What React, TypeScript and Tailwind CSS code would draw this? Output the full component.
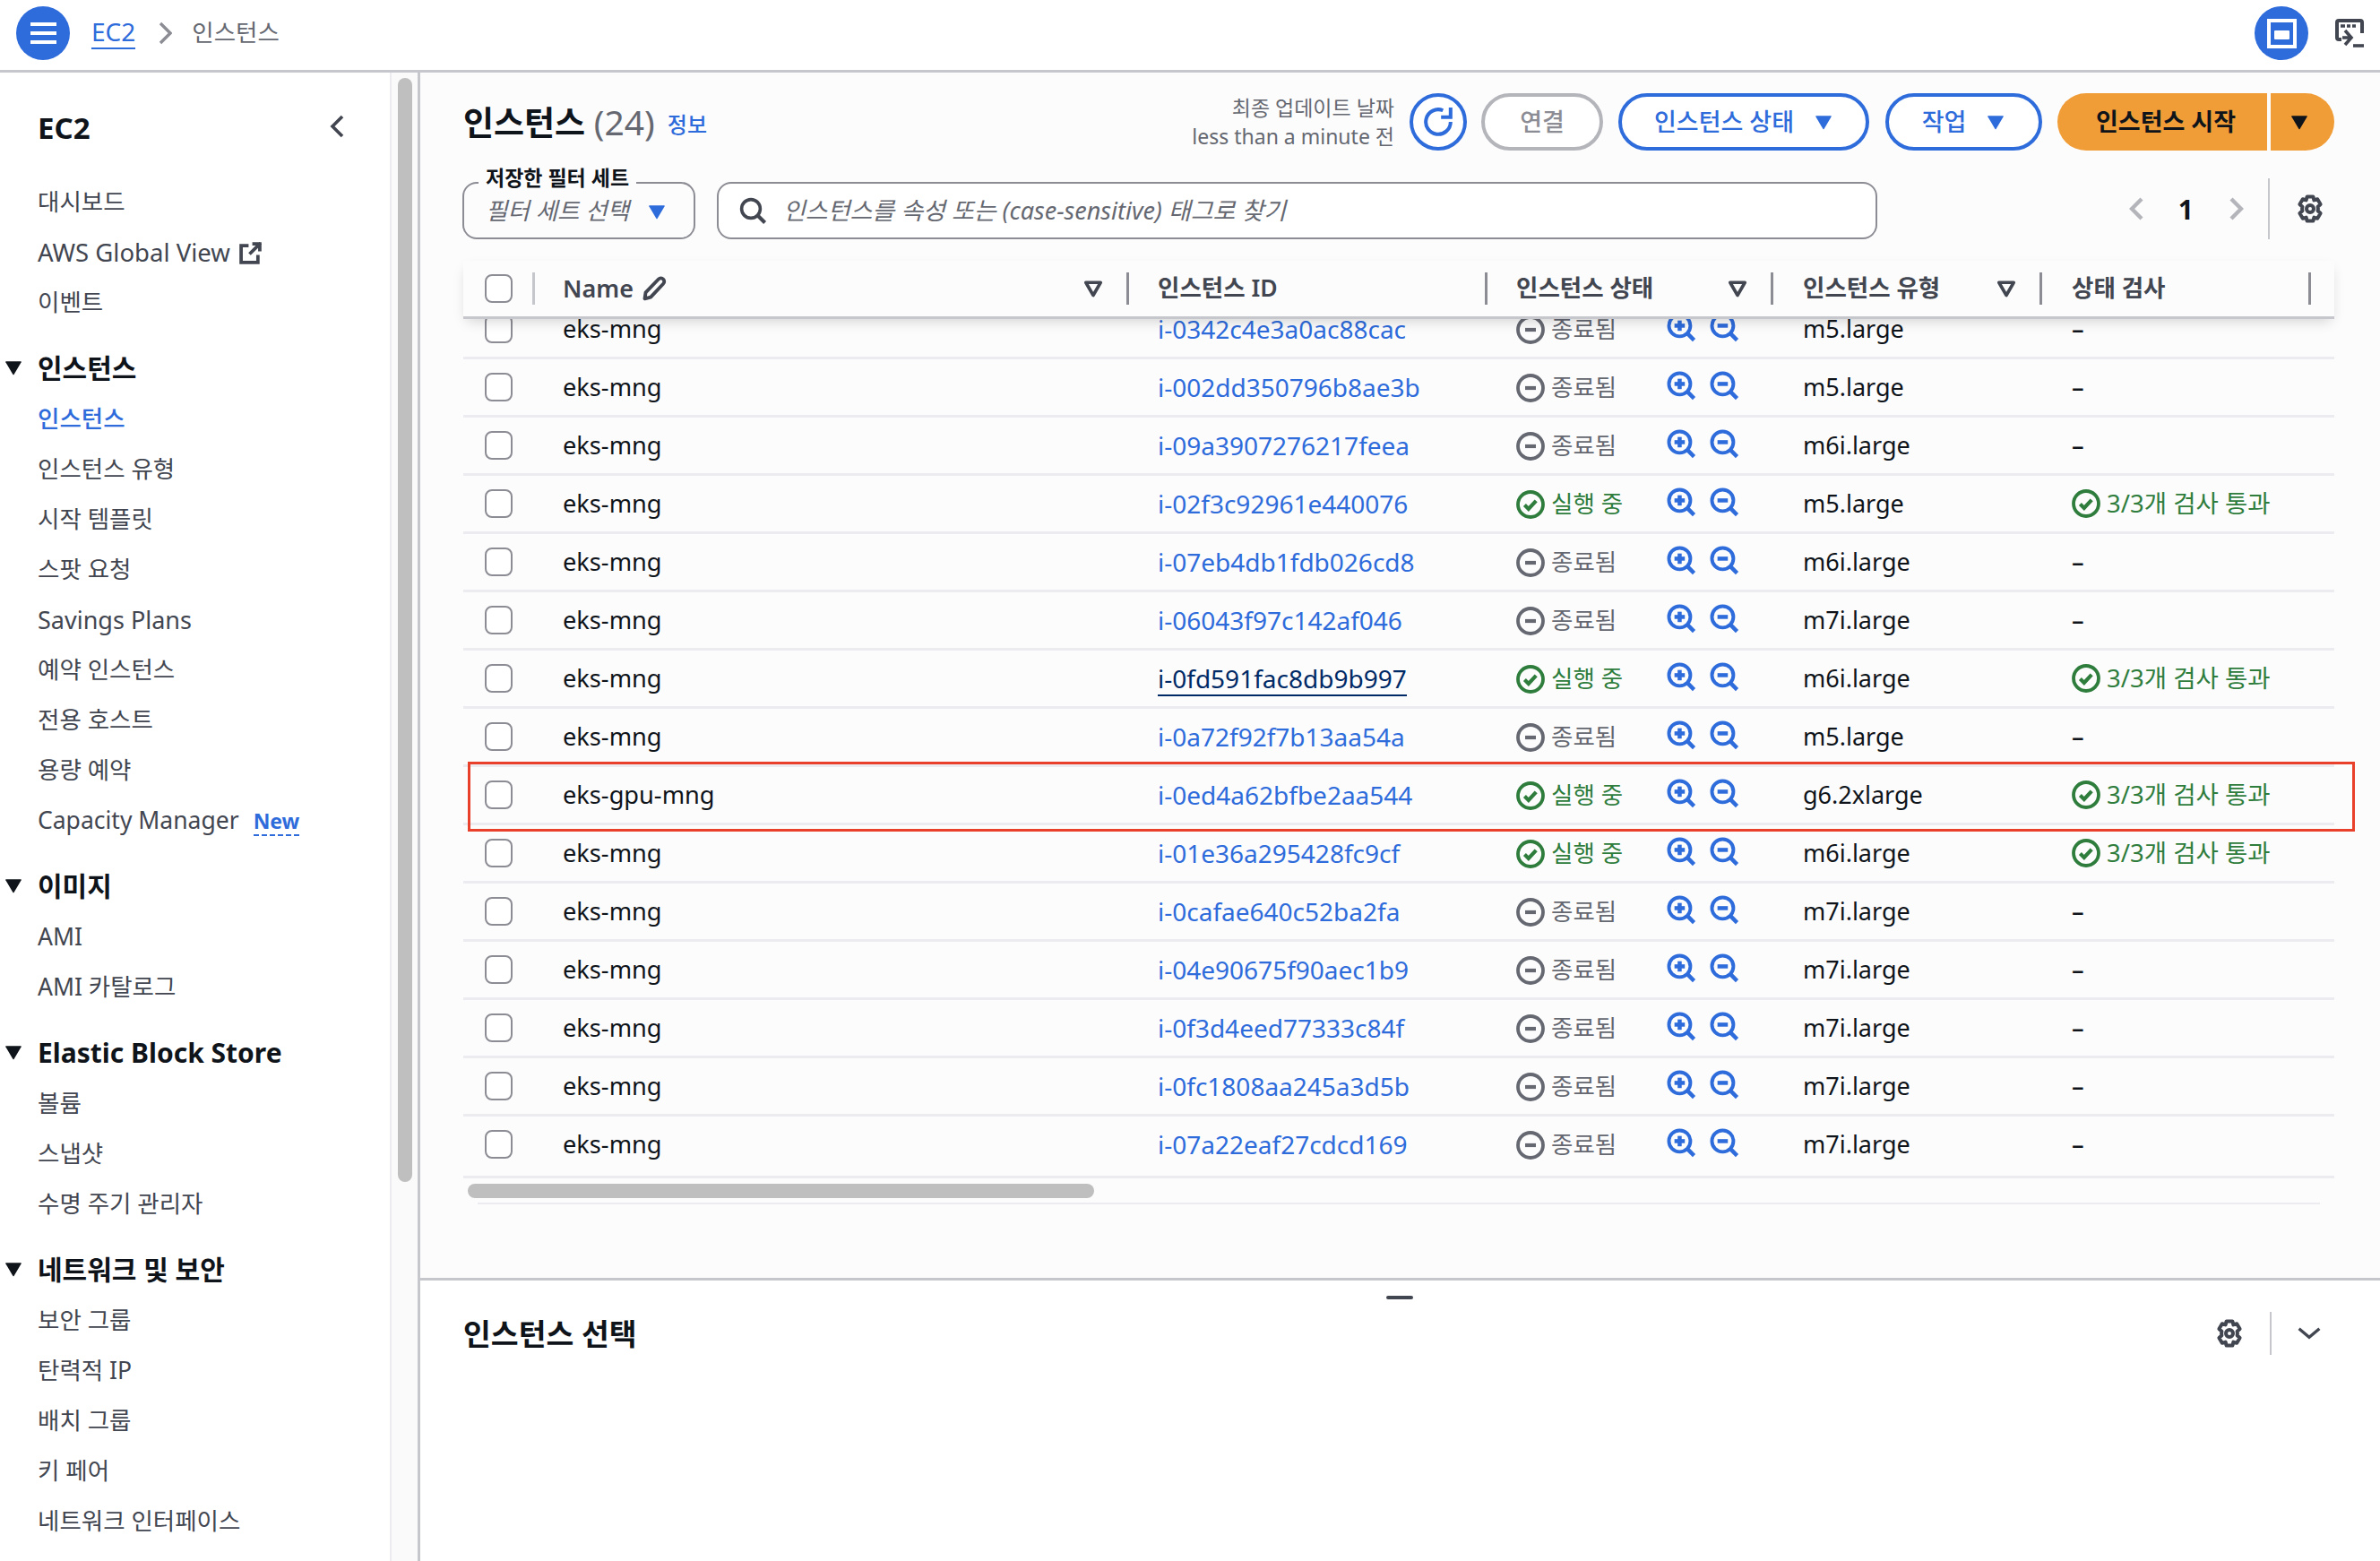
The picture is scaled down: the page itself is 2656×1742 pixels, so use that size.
import React from "react";

const FONT = "font-['Noto_Sans','Noto_Sans_CJK_KR',sans-serif]";

type Row = { name: string; id: string; on: boolean; type: string; hover?: boolean };

const rows: Row[] = [
  { name: "eks-mng", id: "i-0342c4e3a0ac88cac", on: false, type: "m5.large" },
  { name: "eks-mng", id: "i-002dd350796b8ae3b", on: false, type: "m5.large" },
  { name: "eks-mng", id: "i-09a3907276217feea", on: false, type: "m6i.large" },
  { name: "eks-mng", id: "i-02f3c92961e440076", on: true, type: "m5.large" },
  { name: "eks-mng", id: "i-07eb4db1fdb026cd8", on: false, type: "m6i.large" },
  { name: "eks-mng", id: "i-06043f97c142af046", on: false, type: "m7i.large" },
  { name: "eks-mng", id: "i-0fd591fac8db9b997", on: true, type: "m6i.large", hover: true },
  { name: "eks-mng", id: "i-0a72f92f7b13aa54a", on: false, type: "m5.large" },
  { name: "eks-gpu-mng", id: "i-0ed4a62bfbe2aa544", on: true, type: "g6.2xlarge" },
  { name: "eks-mng", id: "i-01e36a295428fc9cf", on: true, type: "m6i.large" },
  { name: "eks-mng", id: "i-0cafae640c52ba2fa", on: false, type: "m7i.large" },
  { name: "eks-mng", id: "i-04e90675f90aec1b9", on: false, type: "m7i.large" },
  { name: "eks-mng", id: "i-0f3d4eed77333c84f", on: false, type: "m7i.large" },
  { name: "eks-mng", id: "i-0fc1808aa245a3d5b", on: false, type: "m7i.large" },
  { name: "eks-mng", id: "i-07a22eaf27cdcd169", on: false, type: "m7i.large" },
];

const navGroups = [
  {
    title: "인스턴스",
    items: ["인스턴스", "인스턴스 유형", "시작 템플릿", "스팟 요청", "Savings Plans", "예약 인스턴스", "전용 호스트", "용량 예약", "Capacity Manager"],
  },
  { title: "이미지", items: ["AMI", "AMI 카탈로그"] },
  { title: "Elastic Block Store", items: ["볼륨", "스냅샷", "수명 주기 관리자"] },
  { title: "네트워크 및 보안", items: ["보안 그룹", "탄력적 IP", "배치 그룹", "키 페어", "네트워크 인터페이스"] },
];

function Caret({ className }: { className: string }) {
  return (
    <svg viewBox="0 0 16 16" className={className} fill="currentColor">
      <path d="M2.2 3h11.6a.6.6 0 0 1 .5.9L8.5 13.6a.6.6 0 0 1-1 0L1.7 3.9a.6.6 0 0 1 .5-.9z" />
    </svg>
  );
}

function FilterCaret() {
  return (
    <svg viewBox="0 0 16 16" className="w-[24px] h-[24px] text-[#424650]" fill="none" stroke="currentColor" strokeWidth="2.4" strokeLinejoin="round">
      <path d="M2.5 3.5h11L8 13z" />
    </svg>
  );
}

function Gear() {
  return (
    <svg viewBox="0 0 16 16" className="w-[32px] h-[32px] text-[#424650]" fill="none" stroke="currentColor" strokeWidth="2" strokeLinejoin="round">
      <circle cx="8" cy="8" r="2" />
      <path d="M6.3 1.2h3.4l.5 2 1.9-.6 1.7 2.9-1.5 1.4a4 4 0 0 1 0 2.2l1.5 1.4-1.7 2.9-1.9-.6-.5 2H6.3l-.5-2-1.9.6-1.7-2.9 1.5-1.4a4 4 0 0 1 0-2.2L2.2 5.5l1.7-2.9 1.9.6z" />
    </svg>
  );
}

function StateIcon({ on, className }: { on: boolean; className: string }) {
  return (
    <svg viewBox="0 0 16 16" className={className} fill="none" stroke="currentColor" strokeWidth="1.9">
      <circle cx="8" cy="8" r="7" />
      {on ? <path d="M4.7 8.3l2.2 2.2 4.2-4.6" strokeWidth="2.1" /> : <path d="M5 8h6" strokeWidth="2.1" />}
    </svg>
  );
}

function Zoom({ plus }: { plus?: boolean }) {
  return (
    <svg viewBox="0 0 16 16" className="w-[33px] h-[33px] text-[#2e6bdb]" fill="none" stroke="currentColor" strokeWidth="1.9">
      <circle cx="7" cy="7" r="5.8" />
      <path d="M11.2 11.2l3.6 3.6" strokeWidth="2.2" />
      <path d="M4.2 7h5.6" strokeWidth="2.2" />
      {plus && <path d="M7 4.2v5.6" strokeWidth="2.2" />}
    </svg>
  );
}

function Checkbox() {
  return <div className="w-[31px] h-[32px] shrink-0 rounded-[8px] border-2 border-[#8c8c94] bg-white" />;
}

function Sep({ dark }: { dark?: boolean }) {
  return <div className={`w-[3px] h-[36px] shrink-0 ${dark ? "bg-[#8c8c94]" : "bg-[#c6c6cd]"}`} />;
}

function TopBar() {
  return (
    <div className="h-[81px] shrink-0 border-b-[3px] border-[#c6c6cd] bg-white flex items-center pl-[18px] pr-[18px]">
      <div className="w-[60px] h-[60px] rounded-full bg-[#2e6bdb] flex flex-col items-center justify-center gap-[6px] -mt-[4px]">
        <div className="w-[29px] h-[4px] bg-white" />
        <div className="w-[29px] h-[4px] bg-white" />
        <div className="w-[29px] h-[4px] bg-white" />
      </div>
      <a className="ml-[24px] -mt-[6px] text-[28px] leading-[36px] text-[#2e6bdb] border-b-2 border-[#2e6bdb]">EC2</a>
      <svg viewBox="0 0 15 26" className="ml-[26px] -mt-[4px] w-[15px] h-[26px] text-[#8c8c94]" fill="none" stroke="currentColor" strokeWidth="3.4">
        <path d="M2 2l11 11L2 24" />
      </svg>
      <span className="ml-[22px] -mt-[5px] text-[26.5px] text-[#656871]">인스턴스</span>
      <div className="ml-auto -mt-[4px] w-[60px] h-[60px] rounded-full bg-[#2e6bdb] flex items-center justify-center">
        <div className="w-[33px] h-[33px] border-[4px] border-white flex items-center justify-center">
          <div className="w-[17px] h-[10px] mt-[3px] bg-white rounded-[1px]" />
        </div>
      </div>
      <svg viewBox="0 0 32 32" className="ml-[30px] -mt-[4px] w-[32px] h-[32px] text-[#424650]" fill="none" stroke="currentColor" strokeWidth="4">
        <path d="M7 23H4a2 2 0 0 1-2-2V4a2 2 0 0 1 2-2h24a2 2 0 0 1 2 2v12" />
        <path d="M8 21h10M11 13l7 8-7 8" strokeWidth="3.6" />
        <path d="M20 30h12" strokeWidth="3.6" />
        <path d="M6 8h5M13 8h4M19 8h4" strokeWidth="3.4" />
      </svg>
    </div>
  );
}

function Sidebar() {
  return (
    <aside className="w-[437px] shrink-0 border-r-2 border-[#ececf0] bg-white pl-[42px] pr-[50px] overflow-hidden">
      <div className="h-[117px] flex items-center justify-between pt-[6px]">
        <span className="text-[33px] font-bold text-[#0f141a]">EC2</span>
        <svg viewBox="0 0 16 26" className="w-[16px] h-[26px] mr-[1px] -mt-[4px] text-[#424650]" fill="none" stroke="currentColor" strokeWidth="3.6">
          <path d="M14 2L3 13l11 11" />
        </svg>
      </div>
      <div className="h-[56px] flex items-center text-[26.5px] text-[#424650]">대시보드</div>
      <div className="h-[56px] flex items-center gap-[10px] text-[27.5px] text-[#424650]">
        AWS Global View
        <svg viewBox="0 0 24 24" className="w-[25px] h-[25px]" fill="none" stroke="currentColor" strokeWidth="3.6">
          <path d="M10 4H2v18h18v-8" />
          <path d="M23 1L11 13M14 2h8v8" />
        </svg>
      </div>
      <div className="h-[56px] flex items-center text-[26.5px] text-[#424650]">이벤트</div>
      {navGroups.map((g) => (
        <div key={g.title} className="mt-[14px]">
          <div className="relative h-[60px] flex items-center text-[30px] font-bold text-[#0f141a]">
            <Caret className="absolute -left-[38px] top-[19px] w-[22px] h-[22px]" />
            {g.title}
          </div>
          {g.items.map((item, i) => (
            <div
              key={item}
              className={`h-[56px] flex items-center gap-[16px] ${item === "Savings Plans" ? "text-[27px]" : "text-[26.5px]"} ${
                g.title === "인스턴스" && i === 0 ? "text-[#2e6bdb] font-medium" : "text-[#424650]"
              }`}
            >
              {item}
              {item === "Capacity Manager" && (
                <span className="mt-[2px] text-[23px] font-bold leading-[30px] text-[#2e6bdb] border-b-2 border-dashed border-[#2e6bdb]">New</span>
              )}
            </div>
          ))}
        </div>
      ))}
    </aside>
  );
}

function Toolbar() {
  return (
    <div className="flex items-center">
      <h1 className="text-[37px] font-bold text-[#0f141a] leading-[48px]">
        인스턴스 <span className="text-[39px] font-normal text-[#656871]">(24)</span>
      </h1>
      <a className="ml-[14px] mt-[6px] text-[24px] font-medium text-[#2e6bdb]">정보</a>
      <div className="ml-auto text-right text-[23px] leading-[32px] text-[#656871]">
        <div>최종 업데이트 날짜</div>
        <div>less than a minute 전</div>
      </div>
      <button className="ml-[17px] w-[64px] h-[64px] rounded-full border-[4px] border-[#2e6bdb] bg-white flex items-center justify-center text-[#2e6bdb]">
        <svg viewBox="0 0 32 32" className="w-[34px] h-[34px]" fill="none" stroke="currentColor" strokeWidth="3.8">
          <path d="M29 16A13 13 0 1 1 21 4" />
          <path d="M19 11h10V1" />
        </svg>
      </button>
      <button className="ml-[16px] w-[136px] h-[64px] rounded-full border-[4px] border-[#b4b4bb] bg-white text-[27px] font-medium text-[#8c8c94]">연결</button>
      <button className="ml-[17px] w-[280px] h-[64px] rounded-full border-[4px] border-[#2e6bdb] bg-white flex items-center justify-center gap-[22px] text-[27px] font-medium text-[#2e6bdb]">
        인스턴스 상태
        <Caret className="w-[22px] h-[22px]" />
      </button>
      <button className="ml-[18px] w-[175px] h-[64px] rounded-full border-[4px] border-[#2e6bdb] bg-white flex items-center justify-center gap-[22px] text-[27px] font-medium text-[#2e6bdb]">
        작업
        <Caret className="w-[22px] h-[22px]" />
      </button>
      <button className="ml-[17px] w-[234px] h-[64px] rounded-l-full bg-[#f09d38] text-[27px] font-bold text-[#0f141a] pl-[8px]">인스턴스 시작</button>
      <button className="ml-[4px] w-[71px] h-[64px] rounded-r-full bg-[#f09d38] flex items-center justify-center pr-[8px] text-[#0f141a]">
        <Caret className="w-[22px] h-[22px]" />
      </button>
    </div>
  );
}

function FilterBar() {
  return (
    <div className="mt-[35px] flex items-center">
      <div className="relative -ml-[1px] w-[260px] h-[64px] rounded-[16px] border-2 border-[#8c8c94] flex items-center pl-[24px]">
        <span className="absolute left-[16px] -top-[24px] bg-[#fcfcfd] px-[8px] text-[23px] leading-[34px] font-bold text-[#0f141a]">저장한 필터 세트</span>
        <span className="mt-[1px] text-[26.5px] italic text-[#656871]">필터 세트 선택</span>
        <Caret className="ml-[20px] mt-[1px] w-[22px] h-[22px] text-[#2e6bdb]" />
      </div>
      <div className="ml-[24px] w-[1295px] h-[64px] rounded-[16px] border-2 border-[#8c8c94] bg-white flex items-center pl-[22px]">
        <svg viewBox="0 0 16 16" className="w-[32px] h-[32px] text-[#424650]" fill="none" stroke="currentColor" strokeWidth="1.8">
          <circle cx="7" cy="7" r="5.2" />
          <path d="M10.8 10.8l4 4" strokeWidth="2.1" />
        </svg>
        <span className="ml-[18px] text-[27px] italic text-[#656871]">인스턴스를 속성 또는 (case-sensitive) 태그로 찾기</span>
      </div>
      <div className="ml-auto flex items-center h-[68px] -mt-[4px]">
        <svg viewBox="0 0 16 26" className="w-[16px] h-[26px] text-[#b4b4bb]" fill="none" stroke="currentColor" strokeWidth="4.4">
          <path d="M14 2L3 13l11 11" />
        </svg>
        <span className="ml-[39px] text-[30px] font-bold text-[#0f141a]">1</span>
        <svg viewBox="0 0 16 26" className="ml-[40px] w-[16px] h-[26px] text-[#b4b4bb]" fill="none" stroke="currentColor" strokeWidth="4.4">
          <path d="M2 2l11 11L2 24" />
        </svg>
        <div className="ml-[27px] w-[2px] h-[68px] bg-[#c6c6cd]" />
        <div className="ml-[29px] mr-[11px]">
          <Gear />
        </div>
      </div>
    </div>
  );
}

function TableHead() {
  return (
    <div className="relative z-10 mt-[24px] h-[65px] flex items-center border-b-[3px] border-[#c6c6cd] text-[26.5px] font-semibold text-[#424650] bg-[#fcfcfd] shadow-[0_6px_14px_-4px_rgba(0,0,0,0.18)]">
      <div className="w-[111px] shrink-0 flex items-center pl-[24px] gap-[22px]">
        <Checkbox />
        <Sep />
      </div>
      <div className="w-[664px] shrink-0 flex items-center pr-[32px]">
        <span className="text-[27px]">Name</span>
        <svg viewBox="0 0 16 16" className="ml-[9px] w-[28px] h-[28px]" fill="none" stroke="currentColor" strokeWidth="2.2" strokeLinejoin="round">
          <path d="M2 14.5l.6-4L10.8 2a2 2 0 0 1 3 3l-8 8.5z" />
        </svg>
        <div className="ml-auto flex items-center gap-[25px]">
          <FilterCaret />
          <Sep dark />
        </div>
      </div>
      <div className="w-[400px] shrink-0 flex items-center justify-between pr-[32px]">
        인스턴스 ID
        <Sep dark />
      </div>
      <div className="w-[320px] shrink-0 flex items-center pr-[33px]">
        인스턴스 상태
        <div className="ml-auto flex items-center gap-[25px]">
          <FilterCaret />
          <Sep dark />
        </div>
      </div>
      <div className="w-[300px] shrink-0 flex items-center pr-[33px]">
        인스턴스 유형
        <div className="ml-auto flex items-center gap-[25px]">
          <FilterCaret />
          <Sep dark />
        </div>
      </div>
      <div className="flex-1 flex items-center justify-between pr-[26px]">
        상태 검사
        <Sep dark />
      </div>
    </div>
  );
}

function TableRow({ row, last }: { row: Row; last: boolean }) {
  return (
    <div className={`flex items-start border-b-[3px] border-[#ececf0] text-[27.2px] text-[#0f141a] ${last ? "h-[69px]" : "h-[65px]"}`}>
      <div className="w-[111px] h-[62px] shrink-0 flex items-center pl-[24px]">
        <Checkbox />
      </div>
      <div className="w-[664px] h-[62px] shrink-0 flex items-center">{row.name}</div>
      <div className="w-[400px] h-[62px] shrink-0 flex items-center text-[28px]">
        <a className={row.hover ? "text-[#002a66] border-b-2 border-[#002a66] leading-[36px] mt-[2px]" : "text-[#2e6bdb]"}>{row.id}</a>
      </div>
      <div className="w-[320px] h-[62px] shrink-0 flex items-center">
        <StateIcon on={row.on} className={`w-[32px] h-[32px] mt-[1px] ${row.on ? "text-[#2f7d3c]" : "text-[#656871]"}`} />
        <span className={`ml-[7px] mt-[1px] w-[129px] text-[26.5px] ${row.on ? "text-[#2f7d3c]" : "text-[#656871]"}`}>{row.on ? "실행 중" : "종료됨"}</span>
        <div className="flex items-center gap-[15px] -mt-[3px]">
          <Zoom plus />
          <Zoom />
        </div>
      </div>
      <div className="w-[300px] h-[62px] shrink-0 flex items-center text-[27px]">{row.type}</div>
      <div className="flex-1 h-[62px] flex items-center">
        {row.on ? (
          <>
            <StateIcon on className="w-[32px] h-[32px] text-[#2f7d3c]" />
            <span className="ml-[7px] text-[27.5px] text-[#2f7d3c]">3/3개 검사 통과</span>
          </>
        ) : (
          <span className="font-medium">–</span>
        )}
      </div>
    </div>
  );
}

function InstanceTable() {
  return (
    <>
      <TableHead />
      <div className="h-[959px] overflow-hidden">
        <div className="-mt-[20px]">
          {rows.map((row, i) => (
            <TableRow key={row.id} row={row} last={i === rows.length - 1} />
          ))}
        </div>
      </div>
      <div className="mt-[6px] ml-[5px] w-[699px] h-[16px] rounded-full bg-[#bfbfbf]" />
      <div className="mt-[5px] mx-[16px] h-[2px] bg-[#ececf0]" />
    </>
  );
}

export default function App() {
  return (
    <div className={`h-screen w-screen overflow-hidden flex flex-col bg-white ${FONT}`}>
      <TopBar />
      <div className="flex-1 flex min-h-0">
        <Sidebar />
        <div className="w-[29px] shrink-0 bg-[#fafafa] pl-[7px] pt-[6px]">
          <div className="w-[16px] h-[1232px] rounded-full bg-[#bfbfbf]" />
        </div>
        <main className="flex-1 flex flex-col min-w-0 border-l-[3px] border-[#c6c6cd]">
          <section className="relative h-[1348px] shrink-0 bg-[#fcfcfd] pl-[48px] pr-[51px] pt-[23px] border-b-[3px] border-[#c6c6cd]">
            <Toolbar />
            <FilterBar />
            <InstanceTable />
            {/* annotation box drawn on the screenshot */}
            <div className="absolute left-[53px] top-[769px] w-[2106px] h-[78px] border-[3px] border-[#e8402a]" />
          </section>
          <section className="relative flex-1 bg-white pl-[48px] pr-[51px] pt-[35px]">
            <div className="absolute left-[1078px] top-[17px] w-[30px] h-[4px] rounded-full bg-[#424650]" />
            <div className="flex items-center h-[48px]">
              <h2 className="text-[33.5px] font-bold text-[#0f141a]">인스턴스 선택</h2>
              <div className="ml-auto -mt-[1px] mr-[1px]">
                <Gear />
              </div>
              <div className="ml-[28px] w-[2px] h-[48px] bg-[#c6c6cd]" />
              <svg viewBox="0 0 32 16" className="ml-[28px] mr-[14px] w-[28px] h-[16px] text-[#424650]" fill="none" stroke="currentColor" strokeWidth="3.8">
                <path d="M3 2l13 11L29 2" />
              </svg>
            </div>
          </section>
        </main>
      </div>
    </div>
  );
}
